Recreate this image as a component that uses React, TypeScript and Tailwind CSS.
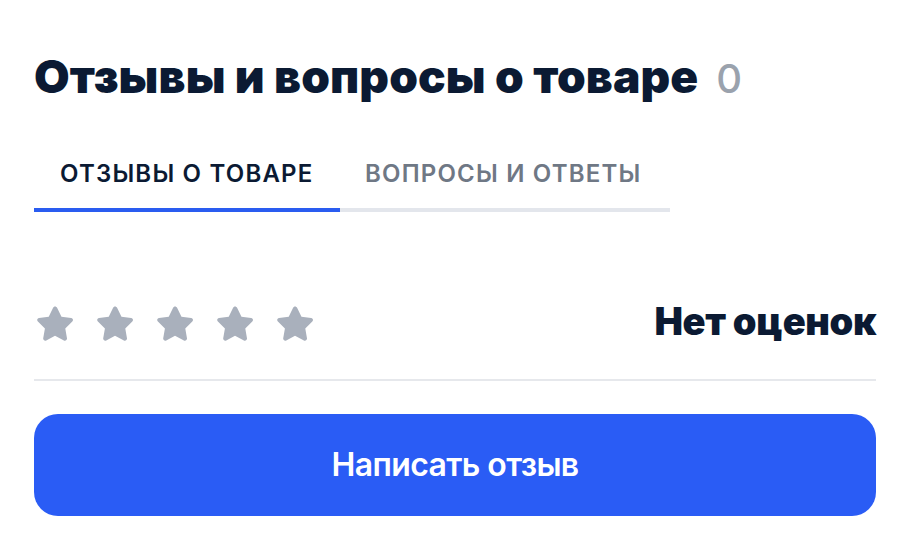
import React from 'react';

const Star: React.FC = () => (
    <svg width="36" height="35" viewBox="2.6 2.4 18.8 18.4" className="shrink-0">
        <path
            d="M12 2.6c.5 0 .9.3 1.1.7l2.3 4.7 5.1.7c.9.1 1.3 1.2.6 1.9l-3.7 3.6.9 5.1c.2.9-.8 1.6-1.6 1.2L12 18.1l-4.6 2.4c-.8.4-1.8-.3-1.6-1.2l.9-5.1-3.7-3.6c-.7-.7-.3-1.8.6-1.9l5.1-.7 2.3-4.7c.2-.4.6-.7 1-.7z"
            fill="#a9b0bc"
        />
    </svg>
);

const App: React.FC = () => {
    return (
        <div className="w-[910px] h-[545px] bg-white px-[34px] pt-[48px] font-['Inter',sans-serif] overflow-hidden">
            <h1 className="flex items-baseline gap-[18px] text-[46px] leading-[56px] font-black tracking-[0.1px] text-[#0b1a33]">
                Отзывы и вопросы о товаре
                <span className="text-[#9aa2ad] font-medium text-[40px]">0</span>
            </h1>

            <div className="mt-[52px] flex w-[636px]">
                <div className="w-[306px] flex flex-col">
                    <span className="pl-[26px] text-[24px] leading-[30px] font-semibold tracking-[1.2px] text-[#0b1a33]">
                        ОТЗЫВЫ О ТОВАРЕ
                    </span>
                    <div className="mt-[19px] h-[4px] bg-[#2a5cf0]" />
                </div>
                <div className="flex-1 flex flex-col">
                    <span className="pl-[25px] text-[24px] leading-[30px] font-semibold tracking-[1.2px] text-[#6f7885]">
                        ВОПРОСЫ И ОТВЕТЫ
                    </span>
                    <div className="mt-[19px] h-[4px] bg-[#e3e6ec]" />
                </div>
            </div>

            <div className="mt-[89px] h-[44px] flex items-center justify-between">
                <div className="flex items-center gap-[24px] pl-[3px]">
                    <Star />
                    <Star />
                    <Star />
                    <Star />
                    <Star />
                </div>
                <span className="pb-[4px] text-[38px] leading-[44px] font-black tracking-[-0.4px] text-[#0b1a33]">
                    Нет оценок
                </span>
            </div>

            <div className="mt-[34px] h-[2px] bg-[#e6e8ec]" />

            <button className="mt-[33px] w-full h-[102px] rounded-[24px] bg-[#2a5cf5] text-white text-[32px] font-semibold tracking-[-0.6px]">
                Написать отзыв
            </button>
        </div>
    );
};

export default App;
